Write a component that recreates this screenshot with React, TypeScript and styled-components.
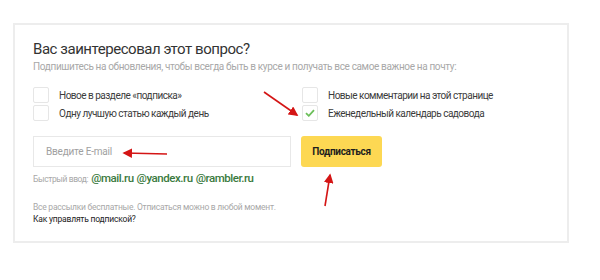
import React from 'react'
import styled, { createGlobalStyle } from 'styled-components'

const GlobalStyle = createGlobalStyle`
  html, body {
    margin: 0;
    padding: 0;
    background: #ffffff;
  }
  body {
    font-family: Roboto, 'Liberation Sans', sans-serif;
    color: #333;
  }
`

const Page = styled.div`
  position: relative;
  width: 600px;
  height: 280px;
  padding: 23px 0 0 13px;
  box-sizing: border-box;
`

const Card = styled.section`
  width: 556px;
  height: 220px;
  box-sizing: border-box;
  border: 2px solid #ededed;
  padding: 14px 18px 0 18px;
`

const Title = styled.h2`
  margin: 0;
  font-size: 15px;
  line-height: 20px;
  font-weight: 400;
  letter-spacing: -0.45px;
  color: #333;
`

const Subtitle = styled.p`
  margin: 1px 0 0;
  font-size: 10px;
  line-height: 14px;
  letter-spacing: -0.35px;
  color: #a8a8a8;
`

const Options = styled.div`
  display: grid;
  grid-template-columns: 269px 1fr;
  row-gap: 2px;
  margin-top: 13px;
`

const Option = styled.label`
  display: flex;
  align-items: center;
  gap: 10px;
  height: 16px;
  font-size: 10px;
  letter-spacing: -0.5px;
  color: #3c3c3c;
`

const Box = styled.span`
  width: 16px;
  height: 16px;
  box-sizing: border-box;
  border: 1px solid #e6e6e6;
  border-radius: 2px;
  display: flex;
  align-items: center;
  justify-content: center;
  background: #fff;
`

const Form = styled.div`
  display: flex;
  gap: 10px;
  margin-top: 15px;
`

const EmailInput = styled.input`
  width: 258px;
  height: 31px;
  box-sizing: border-box;
  border: 1px solid #e8e8e8;
  padding: 0 12px;
  font-family: inherit;
  font-size: 10px;
  letter-spacing: -0.2px;
  outline: none;
  &::placeholder {
    color: #a0a0a0;
  }
`

const SubmitButton = styled.button`
  width: 81px;
  height: 31px;
  padding: 0;
  border: none;
  border-radius: 3px;
  background: #fdd853;
  font-family: inherit;
  font-weight: 700;
  font-size: 10px;
  letter-spacing: -0.3px;
  color: #1e1e1e;
`

const Quick = styled.div`
  display: flex;
  align-items: baseline;
  gap: 3px;
  margin-top: 4px;
  height: 14px;
  font-size: 8.5px;
  letter-spacing: -0.4px;
  color: #a8a8a8;
`

const QuickLink = styled.a`
  font-size: 11.5px;
  font-weight: 500;
  letter-spacing: -0.45px;
  color: #3a7a3e;
  text-decoration: none;
`

const Note = styled.p`
  margin: 16px 0 0;
  font-size: 8.5px;
  line-height: 12px;
  letter-spacing: -0.25px;
  color: #a8a8a8;
`

const HelpLink = styled.a`
  display: block;
  font-size: 8.5px;
  line-height: 12px;
  letter-spacing: -0.2px;
  color: #222;
  text-decoration: none;
`

const Arrows = styled.svg`
  position: absolute;
  left: 0;
  top: 0;
  pointer-events: none;
`

const Check = () => (
  <svg width="10" height="8" viewBox="0 0 10 8">
    <path d="M1 4.2 L3.8 6.8 L9 1.2" fill="none" stroke="#6cbf5a" strokeWidth="1.8" />
  </svg>
)

const options = [
  { label: 'Новое в разделе «подписка»', checked: false },
  { label: 'Новые комментарии на этой странице', checked: false },
  { label: 'Одну лучшую статью каждый день', checked: false },
  { label: 'Еженедельный календарь садовода', checked: true },
]

export default function App() {
  return (
    <>
      <GlobalStyle />
      <Page>
        <Card>
          <Title>Вас заинтересовал этот вопрос?</Title>
          <Subtitle>Подпишитесь на обновления, чтобы всегда быть в курсе и получать все самое важное на почту:</Subtitle>
          <Options>
            {options.map((o) => (
              <Option key={o.label}>
                <Box>{o.checked && <Check />}</Box>
                {o.label}
              </Option>
            ))}
          </Options>
          <Form>
            <EmailInput placeholder="Введите E-mail" />
            <SubmitButton>Подписаться</SubmitButton>
          </Form>
          <Quick>
            Быстрый ввод:
            <QuickLink href="#">@mail.ru</QuickLink>
            <QuickLink href="#">@yandex.ru</QuickLink>
            <QuickLink href="#">@rambler.ru</QuickLink>
          </Quick>
          <Note>Все рассылки бесплатные. Отписаться можно в любой момент.</Note>
          <HelpLink href="#">Как управлять подпиской?</HelpLink>
        </Card>
        <Arrows width="600" height="280" viewBox="0 0 600 280">
          <defs>
            <marker id="head" markerWidth="6" markerHeight="6" refX="5" refY="3" orient="auto" markerUnits="strokeWidth">
              <path d="M0 0 L6 3 L0 6 Z" fill="#d41515" />
            </marker>
          </defs>
          <line x1="264" y1="92" x2="297" y2="115" stroke="#d41515" strokeWidth="1.6" markerEnd="url(#head)" />
          <line x1="167" y1="154" x2="124" y2="153" stroke="#d41515" strokeWidth="1.6" markerEnd="url(#head)" />
          <line x1="325" y1="206" x2="330" y2="175" stroke="#d41515" strokeWidth="1.6" markerEnd="url(#head)" />
        </Arrows>
      </Page>
    </>
  )
}
